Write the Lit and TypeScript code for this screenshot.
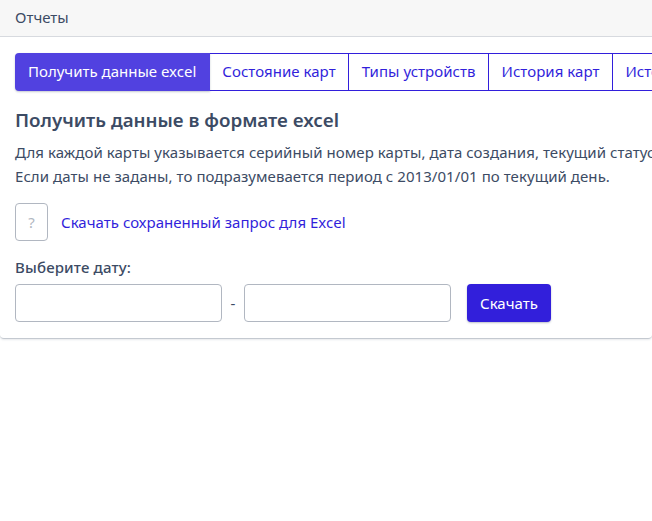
import { LitElement, html, css } from "lit";
import { customElement } from "lit/decorators.js";

@customElement("app-root")
export class AppRoot extends LitElement {
  static styles = css`
    :host {
      display: block;
      width: 652px;
      height: 521px;
      overflow: hidden;
      background: #fff;
      font-family: "Noto Sans", "Open Sans", sans-serif;
      font-size: 15px;
      line-height: 24px;
      color: #3c4b64;
    }
    .crumb {
      height: 34px;
      padding: 0 0 2px 15px;
      background: #f7f7f7;
      border-bottom: 1px solid #d8dbe0;
      display: flex;
      align-items: center;
      color: #3c4b64;
    }
    .card {
      height: 302px;
      box-sizing: border-box;
      padding: 16px 15px;
      border-bottom: 1px solid #c4c9d0;
      border-radius: 0 0 4px 4px;
      box-shadow: 0 1px 2px rgba(60, 75, 100, 0.12);
      overflow: hidden;
    }
    .tabs {
      display: flex;
      width: max-content;
      height: 38px;
    }
    .tab {
      box-sizing: border-box;
      height: 38px;
      padding: 0 12.5px 2px;
      display: flex;
      align-items: center;
      border: 1px solid #321fdb;
      border-left: 0;
      color: #321fdb;
      white-space: nowrap;
      letter-spacing: 0.04px;
    }
    .tab.active {
      background: #5141e0;
      border: 0;
      border-radius: 4px 0 0 4px;
      color: #fff;
      padding: 0 13.5px 2px 13px;
      box-shadow: 0 1px 2px rgba(60, 75, 100, 0.3);
      letter-spacing: 0;
    }
    h2 {
      margin: 15px 0 7px;
      font-size: 18.75px;
      font-weight: 600;
      line-height: 27px;
    }
    .desc {
      margin: 0 0 15px;
      white-space: nowrap;
      letter-spacing: 0.06px;
    }
    .saved {
      display: flex;
      align-items: center;
      gap: 13px;
    }
    .q {
      box-sizing: border-box;
      width: 33px;
      height: 38px;
      border: 1px solid #b1b7c1;
      border-radius: 4px;
      display: flex;
      align-items: center;
      justify-content: center;
      color: #b1b7c1;
    }
    .link { color: #321fdb; text-decoration: none; letter-spacing: 0.03px; }
    label {
      display: block;
      margin-top: 14px;
      font-weight: 500;
      letter-spacing: 0.15px;
      height: 25px;
    }
    .row {
      display: flex;
      align-items: center;
      margin-top: 4px;
    }
    input {
      box-sizing: border-box;
      width: 207px;
      height: 38px;
      border: 1px solid #b1b7c1;
      border-radius: 4px;
      background: #fff;
      outline: none;
      padding: 0 12px;
    }
    .dash { width: 22px; text-align: center; }
    button {
      margin-left: 16px;
      height: 38px;
      width: 84px;
      border: 0;
      border-radius: 4px;
      background: #321fdb;
      color: #fff;
      font: inherit;
      box-shadow: 0 1px 2px rgba(60, 75, 100, 0.35);
    }
  `;

  render() {
    return html`
      <div class="crumb">Отчеты</div>
      <div class="card">
        <div class="tabs">
          <div class="tab active">Получить данные excel</div>
          <div class="tab">Состояние карт</div>
          <div class="tab">Типы устройств</div>
          <div class="tab">История карт</div>
          <div class="tab">История операций</div>
        </div>
        <h2>Получить данные в формате excel</h2>
        <p class="desc">
          Для каждой карты указывается серийный номер карты, дата создания, текущий статус<br />
          Если даты не заданы, то подразумевается период с 2013/01/01 по текущий день.
        </p>
        <div class="saved">
          <div class="q">?</div>
          <a class="link" href="#">Скачать сохраненный запрос для Excel</a>
        </div>
        <label>Выберите дату:</label>
        <div class="row">
          <input type="text" />
          <span class="dash">-</span>
          <input type="text" />
          <button>Скачать</button>
        </div>
      </div>
    `;
  }
}
